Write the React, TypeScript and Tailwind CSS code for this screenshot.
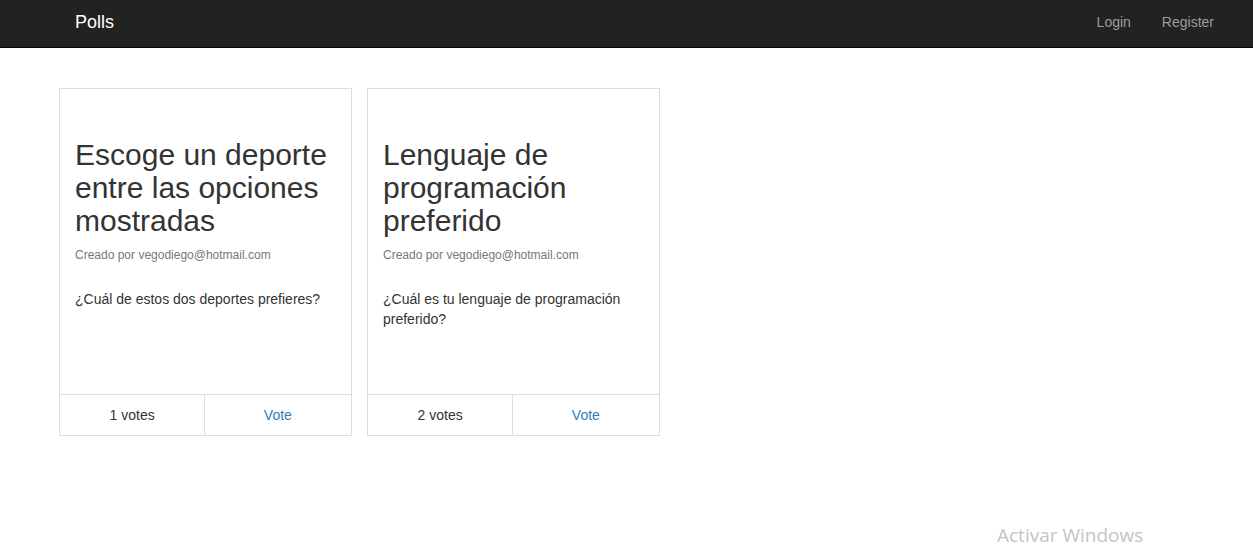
const polls = [
  {
    title: "Escoge un deporte entre las opciones mostradas",
    author: "vegodiego@hotmail.com",
    question: "¿Cuál de estos dos deportes prefieres?",
    votes: 1,
  },
  {
    title: "Lenguaje de programación preferido",
    author: "vegodiego@hotmail.com",
    question: "¿Cuál es tu lenguaje de programación preferido?",
    votes: 2,
  },
];

function PollCard({ poll }: { poll: (typeof polls)[number] }) {
  return (
    <div className="w-[292.5px] h-[348px] border border-[#ddd] flex flex-col">
      <div className="flex-1 px-[15px] pt-[49px]">
        <h1 className="text-[30px] leading-[33px] text-[#333]">{poll.title}</h1>
        <div className="mt-[10px] text-[12px] leading-[17px] text-[#777]">
          Creado por {poll.author}
        </div>
        <p className="mt-[25px] text-[14px] leading-[20px] text-[#333]">{poll.question}</p>
      </div>
      <div className="h-[41px] border-t border-[#ddd] flex text-[14px]">
        <div className="w-1/2 border-r border-[#ddd] flex items-center justify-center text-[#333]">
          {poll.votes} votes
        </div>
        <a className="w-1/2 flex items-center justify-center text-[#337ab7]">Vote</a>
      </div>
    </div>
  );
}

export default function App() {
  return (
    <div className="relative min-h-[551px] bg-white font-['Liberation_Sans',Arial,sans-serif]">
      {/* Navbar */}
      <nav className="h-[48px] pb-[2px] bg-[#222] border-b border-[#080808] flex items-center justify-between pl-[75px] pr-[39px]">
        <span className="text-[18px] text-white">Polls</span>
        <div className="flex gap-[31px] text-[14px] text-[#9d9d9d]">
          <a>Login</a>
          <a>Register</a>
        </div>
      </nav>

      {/* Poll cards */}
      <div className="flex gap-[15.5px] pl-[59px] pt-[40px]">
        {polls.map((p) => (
          <PollCard key={p.title} poll={p} />
        ))}
      </div>

      {/* Windows watermark */}
      <div className="absolute left-[997px] top-[521px] text-[19px] text-[#c4c4c4] font-['Open_Sans',sans-serif]">
        Activar Windows
      </div>
    </div>
  );
}
